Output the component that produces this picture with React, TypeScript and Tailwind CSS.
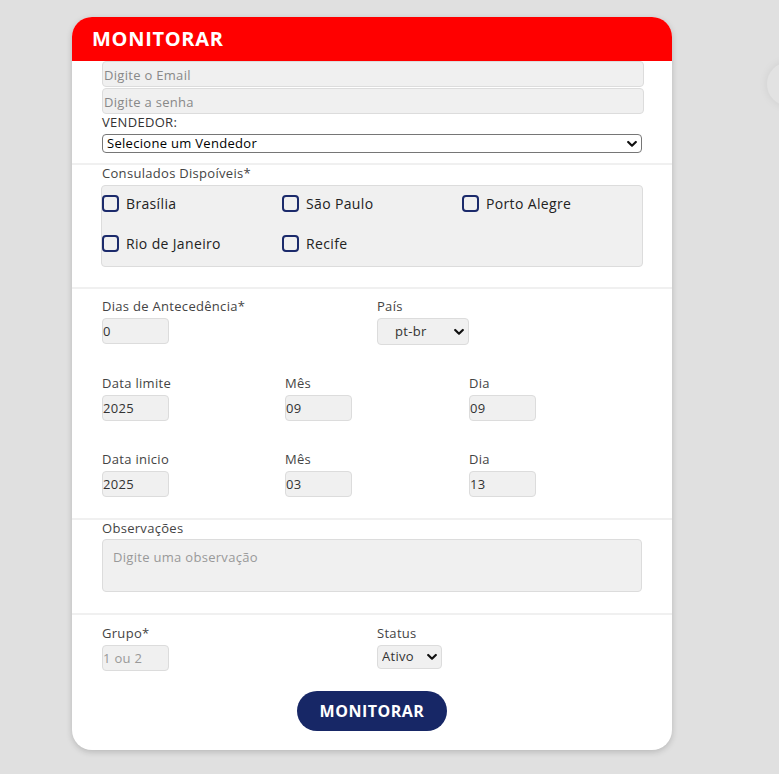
import React from "react";

const font = { fontFamily: '"Open Sans", "Liberation Sans", sans-serif' };

const Chevron = () => (
  <svg width="10" height="7" viewBox="0 0 10 7" className="pointer-events-none absolute right-[5px] top-1/2 -translate-y-1/2">
    <path d="M1.2 1.5 L5 5.2 L8.8 1.5" fill="none" stroke="#111" strokeWidth="2.2" strokeLinecap="round" strokeLinejoin="round" />
  </svg>
);

const Label = ({ children }: { children: React.ReactNode }) => (
  <div className="text-[13px] leading-[16px] tracking-[0.3px] text-[#444]">{children}</div>
);

const SmallInput = ({ value, placeholder }: { value?: string; placeholder?: string }) => (
  <input
    readOnly
    value={value}
    placeholder={placeholder}
    className="mt-[4px] block h-[26px] w-[67px] rounded-[4px] border border-[#dcdcdc] bg-[#f0f0f0] px-0 text-[13px] tracking-[0.3px] text-[#333] placeholder:text-[#999] outline-none"
  />
);

const Check = ({ label }: { label: string }) => (
  <label className="flex h-[20px] items-center gap-[7px]">
    <span className="block h-[17px] w-[17px] rounded-[4px] border-2 border-[#1b2a6b] bg-[#f0f0f0]" />
    <span className="text-[14px] tracking-[0.35px] text-[#222]">{label}</span>
  </label>
);

const Divider = () => <div className="h-[2px] w-full bg-[#f0f0f0]" />;

const App = () => {
  return (
    <div className="relative min-h-screen overflow-hidden bg-[#e0e0e0] pl-[72px] pt-[17px] pb-[24px]" style={font}>
      <div className="absolute right-[-32px] top-[62px] h-[44px] w-[44px] rounded-full bg-[#e2e2e2] shadow-[0_0_10px_rgba(0,0,0,0.08)]" />

      <div className="w-[600px] overflow-hidden rounded-[20px] bg-white shadow-[0_2px_6px_rgba(0,0,0,0.18)]">
        <div className="flex h-[44px] items-center bg-[#ff0000] px-[20px]">
          <h1 className="text-[20px] font-bold tracking-[0.7px] text-white">MONITORAR</h1>
        </div>

        <div className="px-[30px] pb-[10px]">
          <input
            readOnly
            placeholder="Digite o Email"
            className="block h-[26px] w-[542px] rounded-[4px] border border-[#dcdcdc] bg-[#f0f0f0] px-[1px] pt-[1px] text-[13px] tracking-[0.3px] placeholder:text-[#888] outline-none"
          />
          <input
            readOnly
            placeholder="Digite a senha"
            className="mt-[1px] block h-[26px] w-[542px] rounded-[4px] border border-[#dcdcdc] bg-[#f0f0f0] px-[1px] pt-[1px] text-[13px] tracking-[0.3px] placeholder:text-[#888] outline-none"
          />
          <div className="text-[13px] leading-[16px] tracking-[0.3px] text-[#333]">VENDEDOR:</div>
          <div className="relative mt-[4px] w-[540px]">
            <select className="block h-[19px] w-full appearance-none rounded-[4px] border border-[#767676] bg-white pl-[4px] text-[13px] leading-[17px] tracking-[0.3px] text-black outline-none">
              <option>Selecione um Vendedor</option>
            </select>
            <Chevron />
          </div>
        </div>
        <Divider />

        <div className="px-[29px] pb-[20px]">
          <div className="pl-[1px]">
            <Label>Consulados Dispoíveis*</Label>
          </div>
          <div className="mt-[4px] grid h-[82px] w-[542px] grid-cols-[180px_180px_180px] content-start gap-y-[20px] rounded-[4px] border border-[#dcdcdc] bg-[#f0f0f0] pt-[7px]">
            <Check label="Brasília" />
            <Check label="São Paulo" />
            <Check label="Porto Alegre" />
            <Check label="Rio de Janeiro" />
            <Check label="Recife" />
          </div>
        </div>
        <Divider />

        <div className="px-[30px] pt-[9px] pb-[21px]">
          <div className="flex">
            <div className="w-[275px]">
              <Label>Dias de Antecedência*</Label>
              <SmallInput value="0" />
            </div>
            <div>
              <Label>País</Label>
              <div className="relative mt-[4px] w-[92px]">
                <select className="block h-[27px] w-full appearance-none rounded-[4px] border border-[#dcdcdc] bg-[#f0f0f0] pl-[17px] text-[13px] tracking-[0.3px] text-[#333] outline-none">
                  <option>pt-br</option>
                </select>
                <Chevron />
              </div>
            </div>
          </div>

          <div className="mt-[30px] flex">
            <div className="w-[183px]">
              <Label>Data limite</Label>
              <SmallInput value="2025" />
            </div>
            <div className="w-[184px]">
              <Label>Mês</Label>
              <SmallInput value="09" />
            </div>
            <div>
              <Label>Dia</Label>
              <SmallInput value="09" />
            </div>
          </div>

          <div className="mt-[30px] flex">
            <div className="w-[183px]">
              <Label>Data inicio</Label>
              <SmallInput value="2025" />
            </div>
            <div className="w-[184px]">
              <Label>Mês</Label>
              <SmallInput value="03" />
            </div>
            <div>
              <Label>Dia</Label>
              <SmallInput value="13" />
            </div>
          </div>
        </div>
        <Divider />

        <div className="px-[30px] pb-[21px]">
          <Label>Observações</Label>
          <textarea
            readOnly
            placeholder="Digite uma observação"
            className="mt-[3px] block h-[53px] w-[540px] resize-none rounded-[4px] border border-[#dcdcdc] bg-[#f0f0f0] px-[10px] pt-[8px] text-[13px] tracking-[0.3px] placeholder:text-[#999] outline-none"
          />
        </div>
        <Divider />

        <div className="px-[30px] pt-[10px] pb-[19px]">
          <div className="flex">
            <div className="w-[275px]">
              <Label>Grupo*</Label>
              <SmallInput placeholder="1 ou 2" />
            </div>
            <div>
              <Label>Status</Label>
              <div className="relative mt-[4px] w-[65px]">
                <select className="block h-[24px] w-full appearance-none rounded-[4px] border border-[#dcdcdc] bg-[#f0f0f0] pl-[4px] text-[13px] tracking-[0.3px] text-[#333] outline-none">
                  <option>Ativo</option>
                </select>
                <Chevron />
              </div>
            </div>
          </div>

          <div className="mt-[20px] flex justify-center">
            <button className="h-[40px] w-[150px] rounded-full bg-[#172766] text-[16px] font-bold tracking-[0.5px] text-white">
              MONITORAR
            </button>
          </div>
        </div>
      </div>
    </div>
  );
};

export default App;
